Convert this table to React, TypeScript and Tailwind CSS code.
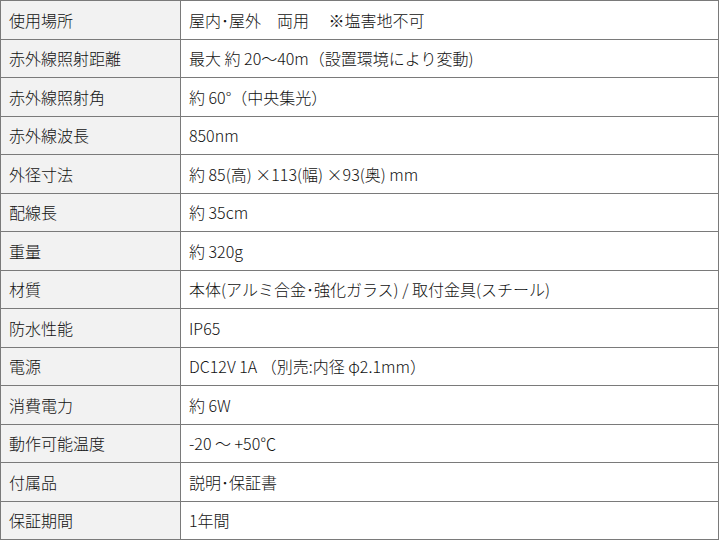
const specs: [string, string][] = [
  ['使用場所', '屋内･屋外　両用　 ※塩害地不可'],
  ['赤外線照射距離', '最大 約 20～40m（設置環境により変動)'],
  ['赤外線照射角', '約 60°（中央集光）'],
  ['赤外線波長', '850nm'],
  ['外径寸法', '約 85(高) ×113(幅) ×93(奥) mm'],
  ['配線長', '約 35cm'],
  ['重量', '約 320g'],
  ['材質', '本体(アルミ合金･強化ガラス) / 取付金具(スチール)'],
  ['防水性能', 'IP65'],
  ['電源', 'DC12V 1A （別売:内径 φ2.1mm）'],
  ['消費電力', '約 6W'],
  ['動作可能温度', '-20 ～ +50℃'],
  ['付属品', '説明･保証書'],
  ['保証期間', '1年間'],
];

export default function App() {
  return (
    <div className="w-[720px] h-[541px] bg-white overflow-hidden font-['Noto_Sans_CJK_JP','Noto_Sans',sans-serif] text-[16px] font-light text-[#111]">
      <table className="w-[719px] border-collapse border border-[#7a7a7a]">
        <tbody>
          {specs.map(([label, value]) => (
            <tr key={label} className="h-[38.5px]">
              <td className="w-[180px] border border-[#7a7a7a] bg-[#f2f2f2] px-2 py-0 leading-none align-middle">
                {label}
              </td>
              <td className="border border-[#7a7a7a] px-2 py-0 leading-none align-middle whitespace-pre">
                {value}
              </td>
            </tr>
          ))}
        </tbody>
      </table>
    </div>
  );
}
